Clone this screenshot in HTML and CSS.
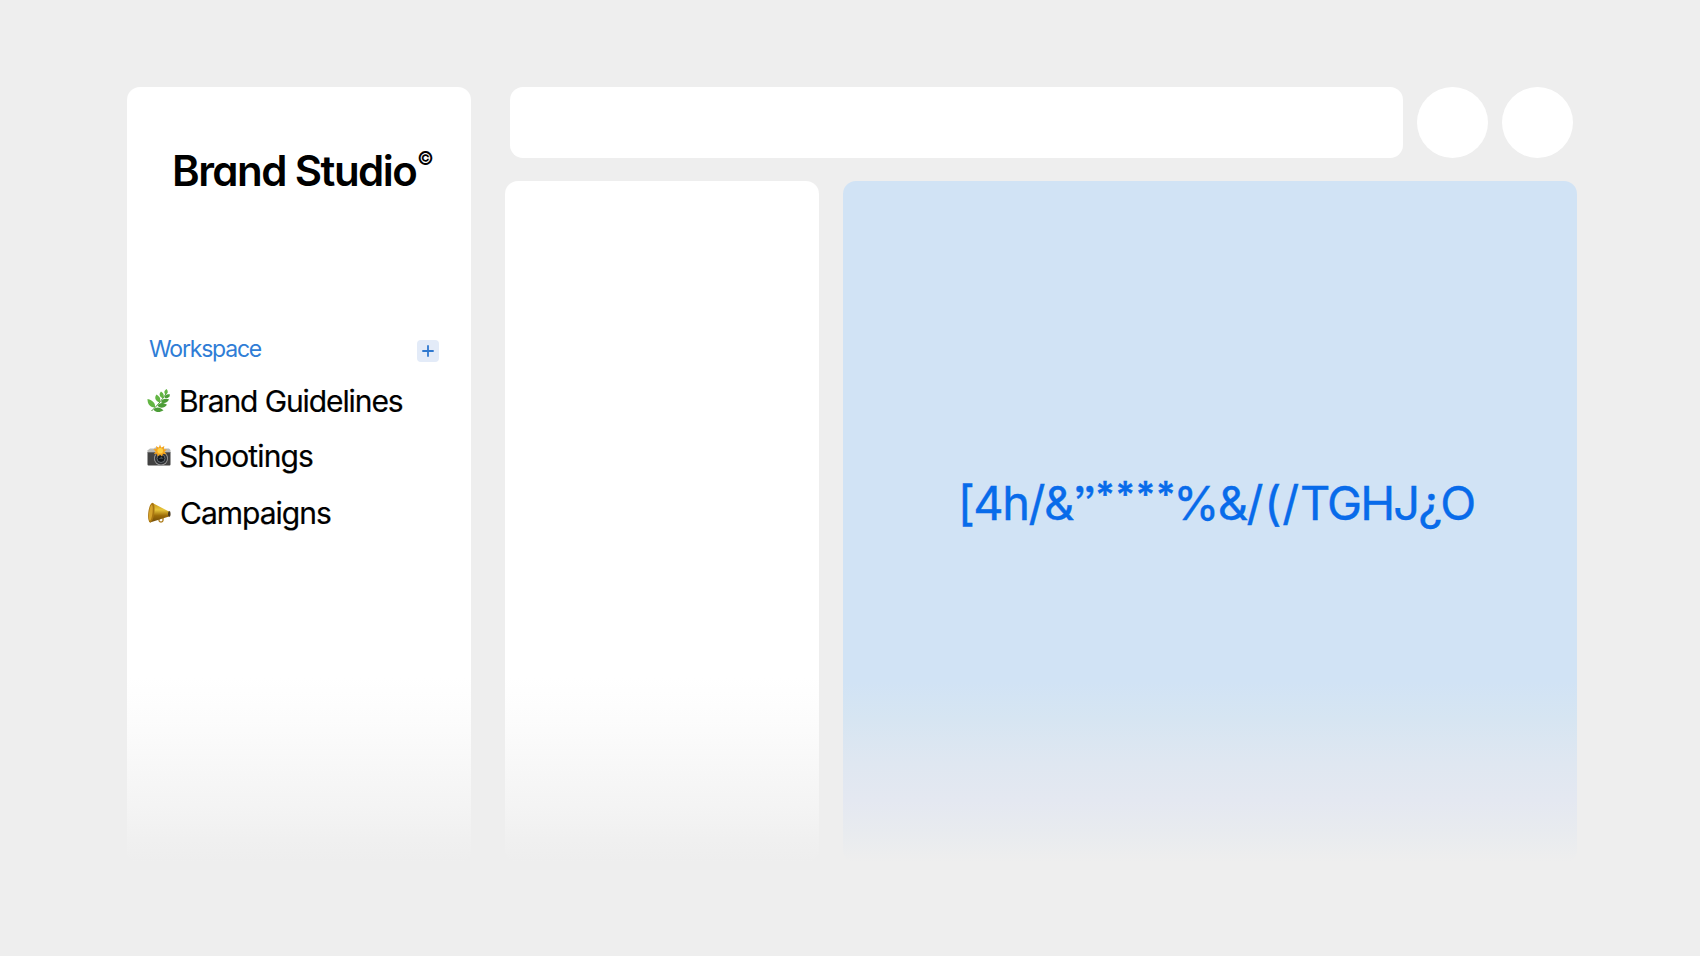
FILE: index.html
```html
<!DOCTYPE html>
<html lang="en">
<head>
    <meta charset="UTF-8">
    <meta name="viewport" content="width=device-width, initial-scale=1.0">
    <title>Brand Studio</title>
    <link rel="stylesheet" href="styles.css">
</head>
<body>
    <div class="app">
        <aside class="sidebar">
            <h1 class="logo">Brand Studio<sup>©</sup></h1>
            <div class="workspace">
                <span class="workspace-title">Workspace</span>
                <button class="add" aria-label="Add">
                    <svg width="12" height="12" viewBox="0 0 12 12"><path d="M6 0.3V11.7M0.3 6H11.7" stroke="#2f78cf" stroke-width="1.8"/></svg>
                </button>
            </div>
            <nav class="menu">
                <a class="item guidelines">
                    <svg width="24" height="24" viewBox="0 0 24 24">
                        <path d="M4.5 22C8 18.500 14 13 20 3" fill="none" stroke="#4b8f32" stroke-width="1"/>
                        <g fill="#62b543">
                            <path d="M18.600 5.500C16.300 3.500 17.500 1.500 19.600 0C21.500 2.500 21.100 4.300 18.600 5.500Z"/>
                            <path d="M16 9.500C12 7.500 11.800 4.800 14 2.500C17 4.500 17.500 7 16 9.500Z"/>
                            <path d="M12.500 13.500C7.500 11.500 7.500 8 9.500 5.500C13.500 8 14 10.500 12.500 13.500Z"/>
                            <path d="M8 18.500C2 18.500 0.500 14 0.500 10C6 11.500 8.500 14 8 18.500Z"/>
                        </g>
                        <g fill="#4c9d37">
                            <path d="M17.500 8.700C18 5.500 20 5 23 5.500C22.500 9 19.800 9.800 17.500 8.700Z"/>
                            <path d="M14 13.200C15.200 9.700 18 9.300 22 10.300C20.500 14 17 15 14 13.200Z"/>
                            <path d="M10.500 16.700C12.500 13.300 16 13.300 20 15.700C17.500 19.200 13 19.700 10.500 16.700Z"/>
                            <path d="M6.500 20.700C9 17.300 13 17.800 16.500 21.300C12.500 24 9 23.500 6.500 20.700Z"/>
                        </g>
                    </svg>
                    <span>Brand Guidelines</span>
                </a>
                <a class="item shootings">
                    <svg width="24" height="24" viewBox="0 0 24 24">
                        <path d="M1 6L3 4.500H7L8 3.500H16L17 4.500H22L23.500 6V9H0.500V6Z" fill="#b9bab8"/>
                        <rect x="0.500" y="8" width="23" height="13.500" rx="1" fill="#424242"/>
                        <path d="M0.500 8.500H23.500" stroke="#777" stroke-width="0.700"/>
                        <circle cx="14" cy="14.500" r="7" fill="#999"/>
                        <circle cx="14" cy="14.500" r="6.100" fill="#303235"/>
                        <circle cx="14" cy="14.500" r="4" fill="#15191d" stroke="#666d73"/>
                        <path d="M11.500 14.500L14.500 13.300L16.500 14.500Z" fill="#68747a"/>
                        <path d="M13 0.500L14.300 3.800L17.300 2L16.800 5.200L20 5.500L17.500 7.600L19.500 10.500L16 9.800L15 12.500L13 10.500L10.500 12.500L10 9.600L6.800 10.300L8.700 7.500L6.200 5.300L9.500 5L9 2L11.800 3.800Z" fill="#f5a51d"/>
                        <circle cx="13.200" cy="6.800" r="2.800" fill="#ffd145"/>
                    </svg>
                    <span>Shootings</span>
                </a>
                <a class="item campaigns">
                    <svg width="24" height="24" viewBox="0 0 24 24">
                        <defs>
                            <linearGradient id="gold" x1="0" y1="0" x2="0" y2="1">
                                <stop offset="0" stop-color="#c99616"/>
                                <stop offset="0.350" stop-color="#e7c63c"/>
                                <stop offset="0.650" stop-color="#9c6c08"/>
                                <stop offset="1" stop-color="#6e4a0a"/>
                            </linearGradient>
                        </defs>
                        <path d="M12 17.500V19.500C12 21.500 16 21.500 16 19.500V16" fill="none" stroke="#ad7b18" stroke-width="1.300"/>
                        <path d="M5.500 2L22 10.500V15.500L3 21.500Z" fill="url(#gold)"/>
                        <ellipse cx="4.300" cy="11.600" rx="3" ry="10" transform="rotate(7 4.300 11.600)" fill="#a97612"/>
                        <ellipse cx="3.800" cy="11.800" rx="1.700" ry="8" transform="rotate(7 3.800 11.800)" fill="#d6a32b"/>
                        <ellipse cx="22.300" cy="13" rx="1.300" ry="2.900" fill="#4b3b20"/>
                    </svg>
                    <span>Campaigns</span>
                </a>
            </nav>
        </aside>
        <main class="content">
            <header class="topbar">
                <div class="search"></div>
                <div class="circle"></div>
                <div class="circle"></div>
            </header>
            <div class="panels">
                <section class="panel"></section>
                <section class="preview">
                    <p class="glyphs">[4h/&amp;”<span class="stars">****</span><span class="percent">%</span>&amp;<span class="slashes">/(/</span><span class="caps">TGHJ¿O</span></p>
                </section>
            </div>
        </main>
    </div>
</body>
</html>
```

FILE: styles.css
```css
* {
    box-sizing: border-box;
}
body {
    margin: 0;
    background-color: #eee;
    font-family: Inter, "Liberation Sans", sans-serif;
    color: #000;
}
.app {
    display: flex;
    gap: 34px;
    height: 956px;
    padding: 87px 123px 92px 127px;
}
.sidebar {
    width: 344px;
    padding-top: 59px;
    border-radius: 13px;
    background: linear-gradient(#fff 590px, #fcfcfc 633px, #f8f8f8 676px, #f4f4f4 718px, #f0f0f0 753px, #eee 775px);
}
.logo {
    margin: 0 0 0 45px;
    height: 50px;
    font-size: 42px;
    line-height: 50px;
    font-weight: 600;
    letter-spacing: -1.55px;
    white-space: nowrap;
    font-feature-settings: "cv11";
}
.logo sup {
    margin-left: 1px;
    font-size: 18px;
    line-height: 0;
    vertical-align: 21px;
}
.workspace {
    display: flex;
    justify-content: space-between;
    align-items: center;
    height: 30px;
    margin: 138px 32px 0 22px;
}
.workspace-title {
    font-size: 23px;
    letter-spacing: -1.2px;
    color: #2f7dd6;
}
.add {
    display: flex;
    align-items: center;
    justify-content: center;
    width: 22px;
    height: 22px;
    margin-top: 3px;
    padding: 0;
    border: none;
    border-radius: 4px;
    background-color: #e3ebf8;
}
.menu {
    display: flex;
    flex-direction: column;
    margin: 9px 0 0 20px;
}
.item {
    display: flex;
    align-items: center;
    gap: 8px;
    height: 56px;
    font-size: 30px;
    letter-spacing: -0.9px;
    white-space: nowrap;
    -webkit-text-stroke: 0.2px #000;
}
.guidelines {
    height: 55px;
    letter-spacing: -1.1px;
}
.campaigns {
    gap: 9px;
    height: 58px;
    letter-spacing: -1px;
}
.content {
    flex: 1;
}
.topbar {
    display: flex;
    gap: 14px;
    height: 71px;
    margin: 0 4px 0 5px;
}
.search {
    flex: 1;
    border-radius: 13px;
    background-color: #fff;
}
.circle {
    width: 71px;
    height: 71px;
    border-radius: 50%;
    background-color: #fff;
}
.panels {
    display: flex;
    gap: 24px;
    height: 682px;
    margin-top: 23px;
}
.panel {
    width: 314px;
    border-radius: 13px;
    background: linear-gradient(#fff 496px, #fcfcfc 539px, #f8f8f8 582px, #f4f4f4 624px, #f0f0f0 659px, #eee 681px);
}
.preview {
    display: flex;
    justify-content: center;
    flex: 1;
    border-radius: 13px;
    background: linear-gradient(#d1e3f5 500px, #d6e5f2 536px, #dfe7f1 582px, #e4e8f1 619px, #e8ebef 650px, #eee 681px);
}
.glyphs {
    margin: 292px 0 0 12px;
    font-size: 47px;
    line-height: 60px;
    letter-spacing: -1.5px;
    white-space: nowrap;
    color: #086bea;
    -webkit-text-stroke: 0.4px #086bea;
    font-feature-settings: "ss03";
}
.stars {
    font-size: 36px;
    line-height: 0;
    font-weight: 600;
    letter-spacing: 0.8px;
    vertical-align: 13px;
}
.percent {
    margin-left: -3px;
}
.slashes {
    letter-spacing: 0.8px;
}
.caps {
    letter-spacing: -1.9px;
}
```
